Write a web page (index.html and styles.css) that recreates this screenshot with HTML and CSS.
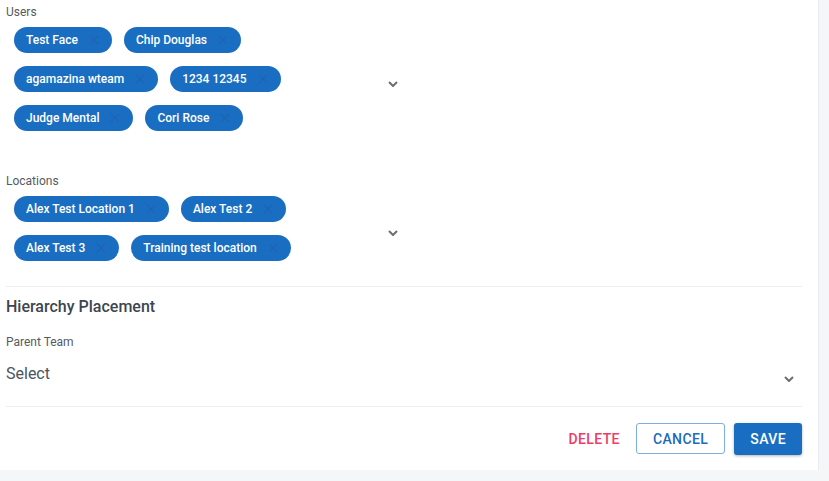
FILE: index.html
```html
<!DOCTYPE html>
<html lang="en">
<head>
    <meta charset="UTF-8">
    <meta name="viewport" content="width=device-width, initial-scale=1.0">
    <title>Edit Team</title>
    <link rel="stylesheet" href="styles.css">
</head>
<body>
    <div class="panel">
        <div class="field">
            <div class="field-label">Users</div>
            <div class="multi-select">
                <div class="chips">
                    <span class="chip">Test Face<svg class="chip-x" viewBox="0 0 10 10"><path d="M1 1l8 8M9 1l-8 8"/></svg></span>
                    <span class="chip">Chip Douglas<svg class="chip-x" viewBox="0 0 10 10"><path d="M1 1l8 8M9 1l-8 8"/></svg></span>
                    <span class="chip">agamazina wteam<svg class="chip-x" viewBox="0 0 10 10"><path d="M1 1l8 8M9 1l-8 8"/></svg></span>
                    <span class="chip">1234 12345<svg class="chip-x" viewBox="0 0 10 10"><path d="M1 1l8 8M9 1l-8 8"/></svg></span>
                    <span class="chip">Judge Mental<svg class="chip-x" viewBox="0 0 10 10"><path d="M1 1l8 8M9 1l-8 8"/></svg></span>
                    <span class="chip">Cori Rose<svg class="chip-x" viewBox="0 0 10 10"><path d="M1 1l8 8M9 1l-8 8"/></svg></span>
                </div>
                <svg class="chevron" viewBox="0 0 10 6"><path d="M1 1l4 4 4-4"/></svg>
            </div>
        </div>

        <div class="field">
            <div class="field-label">Locations</div>
            <div class="multi-select">
                <div class="chips">
                    <span class="chip">Alex Test Location 1<svg class="chip-x" viewBox="0 0 10 10"><path d="M1 1l8 8M9 1l-8 8"/></svg></span>
                    <span class="chip">Alex Test 2<svg class="chip-x" viewBox="0 0 10 10"><path d="M1 1l8 8M9 1l-8 8"/></svg></span>
                    <span class="chip">Alex Test 3<svg class="chip-x" viewBox="0 0 10 10"><path d="M1 1l8 8M9 1l-8 8"/></svg></span>
                    <span class="chip">Training test location<svg class="chip-x" viewBox="0 0 10 10"><path d="M1 1l8 8M9 1l-8 8"/></svg></span>
                </div>
                <svg class="chevron" viewBox="0 0 10 6"><path d="M1 1l4 4 4-4"/></svg>
            </div>
        </div>

        <hr class="divider">

        <h2 class="section-title">Hierarchy Placement</h2>
        <div class="field-label">Parent Team</div>
        <div class="select">
            <span>Select</span>
            <svg class="chevron" viewBox="0 0 10 6"><path d="M1 1l4 4 4-4"/></svg>
        </div>

        <hr class="divider">

        <div class="actions">
            <button class="btn btn-text">DELETE</button>
            <button class="btn btn-outline">CANCEL</button>
            <button class="btn btn-primary">SAVE</button>
        </div>
    </div>
</body>
</html>
```

FILE: styles.css
```css
body {
    margin: 0;
    background-color: #f5f6f8;
    font-family: Roboto, "Liberation Sans", sans-serif;
}
.panel {
    width: 796px;
    height: 470px;
    padding: 0 16px 0 6px;
    background-color: #fff;
    border-right: 1px solid #e9ebef;
}
.field-label {
    font-size: 12px;
    line-height: 14px;
    color: #555b61;
}
.field:first-child .field-label {
    padding-top: 5px;
}
.field + .field {
    margin-top: 43px;
}
.multi-select {
    width: 384px;
    display: flex;
    align-items: center;
    padding: 9px 0 0 8px;
}
.chips {
    flex: 1;
    display: flex;
    flex-wrap: wrap;
    gap: 13px 12px;
    padding-right: 20px;
    margin-top: -1px;
}
.chip {
    display: inline-flex;
    align-items: center;
    height: 26px;
    padding: 0 13px 0 12px;
    border-radius: 13px;
    background-color: #1a6ec2;
    color: #fff;
    font-size: 12px;
    font-weight: 500;
}
.chip-x {
    width: 10px;
    height: 10px;
    margin-left: 11px;
    fill: none;
    stroke: #1d65b4;
    stroke-width: 1.4;
}
.chevron {
    width: 10px;
    height: 6px;
    fill: none;
    stroke: #6b6e72;
    stroke-width: 2;
    margin-top: 8px;
}
.divider {
    border: 0;
    border-top: 1px solid #eeeff2;
    margin: 25px 0 0 0;
}
.section-title {
    margin: 11px 0 0 0;
    font-size: 16px;
    font-weight: 500;
    line-height: 18px;
    color: #3c4650;
}
.section-title + .field-label {
    margin-top: 19px;
}
.select {
    display: flex;
    align-items: center;
    justify-content: space-between;
    padding: 15px 8px 0 0;
    font-size: 16px;
    color: #4a545e;
}
.select .chevron {
    margin-top: 10px;
}
.select + .divider {
    margin-top: 23px;
}
.actions {
    display: flex;
    justify-content: flex-end;
    gap: 8px;
    margin-top: 16px;
}
.btn {
    height: 32px;
    padding: 0 16px;
    border-radius: 3px;
    font-family: inherit;
    font-size: 14px;
    font-weight: 500;
    letter-spacing: 0.4px;
    cursor: pointer;
}
.btn-text {
    border: 0;
    background: none;
    color: #ec3d66;
    padding: 0 8px;
}
.btn-outline {
    height: 31px;
    border: 1px solid #7eaedf;
    background-color: #fff;
    color: #1c6bbd;
    margin-right: 1px;
}
.btn-primary {
    border: 0;
    background-color: #1a6ec2;
    color: #fff;
    box-shadow: 0 1px 3px rgba(0, 0, 0, 0.3);
}
```
